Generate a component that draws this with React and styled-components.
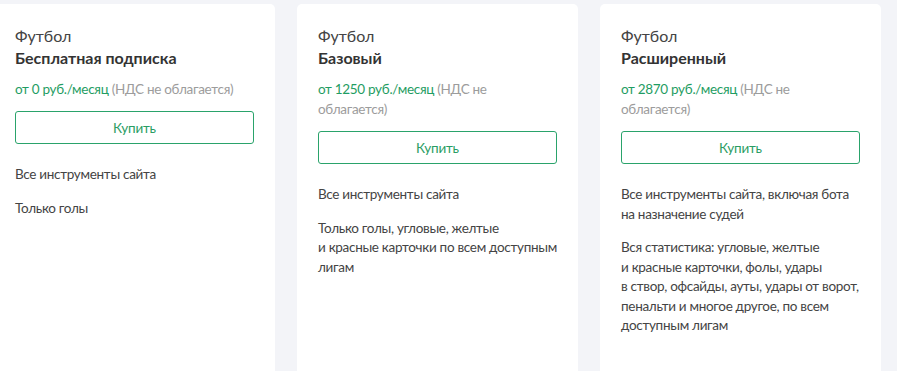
import React from "react";
import styled, { createGlobalStyle } from "styled-components";

const GlobalStyle = createGlobalStyle`
  html, body {
    margin: 0;
    padding: 0;
    background: #f3f4f8;
    overflow: hidden;
  }
  body {
    font-family: Lato, "Noto Sans", sans-serif;
  }
`;

const plans = [
  {
    sport: "Футбол",
    title: "Бесплатная подписка",
    price: "0",
    features: [["Все инструменты сайта"], ["Только голы"]],
  },
  {
    sport: "Футбол",
    title: "Базовый",
    price: "1250",
    features: [
      ["Все инструменты сайта"],
      ["Только голы, угловые, желтые", "и красные карточки по всем доступным", "лигам"],
    ],
  },
  {
    sport: "Футбол",
    title: "Расширенный",
    price: "2870",
    features: [
      ["Все инструменты сайта, включая бота", "на назначение судей"],
      [
        "Вся статистика: угловые, желтые",
        "и красные карточки, фолы, удары",
        "в створ, офсайды, ауты, удары от ворот,",
        "пенальти и многое другое, по всем",
        "доступным лигам",
      ],
    ],
  },
];

const PlanCard = ({ plan }) => (
  <Card>
    <Sport>{plan.sport}</Sport>
    <Title>{plan.title}</Title>
    <Price>
      <Amount>от {plan.price} руб./месяц</Amount> <Vat>(НДС не облагается)</Vat>
    </Price>
    <BuyButton>Купить</BuyButton>
    {plan.features.map((lines, i) => (
      <Feature key={i}>
        {lines.map((line, j) => (
          <Line key={j}>{line}</Line>
        ))}
      </Feature>
    ))}
  </Card>
);

export default function App() {
  return (
    <>
      <GlobalStyle />
      <Row>
        {plans.map((p, i) => (
          <PlanCard key={i} plan={p} />
        ))}
      </Row>
    </>
  );
}

const Row = styled.div`
  display: flex;
  gap: 22px;
  margin-left: -6px;
  padding-top: 4px;
  height: 371px;
  box-sizing: border-box;
`;

const Card = styled.div`
  width: 281px;
  flex-shrink: 0;
  background: #ffffff;
  border-radius: 5px 5px 0 0;
  padding: 21px 21px 0;
  box-sizing: border-box;
  color: #444;
`;

const Sport = styled.div`
  font-size: 16px;
  line-height: 22px;
  color: #444;
`;

const Title = styled.div`
  font-size: 16px;
  line-height: 22px;
  font-weight: 700;
  color: #333;
`;

const Price = styled.div`
  margin-top: 10px;
  font-size: 13.5px;
  letter-spacing: -0.3px;
  line-height: 20px;
`;

const Amount = styled.span`
  color: #1f9d63;
`;

const Vat = styled.span`
  color: #9c9c9c;
`;

const BuyButton = styled.button`
  display: block;
  width: 239px;
  height: 33px;
  margin-top: 12px;
  background: #fff;
  border: 1px solid #2aa36b;
  border-radius: 3px;
  color: #2a9d63;
  font-family: inherit;
  font-size: 13.5px;
  letter-spacing: -0.2px;
  cursor: pointer;
`;

const Feature = styled.div`
  margin-top: 21px;
  font-size: 13.5px;
  letter-spacing: -0.3px;
  line-height: 19.5px;
  color: #444;
  & + & {
    margin-top: 14px;
  }
`;

const Line = styled.div`
  white-space: nowrap;
`;
